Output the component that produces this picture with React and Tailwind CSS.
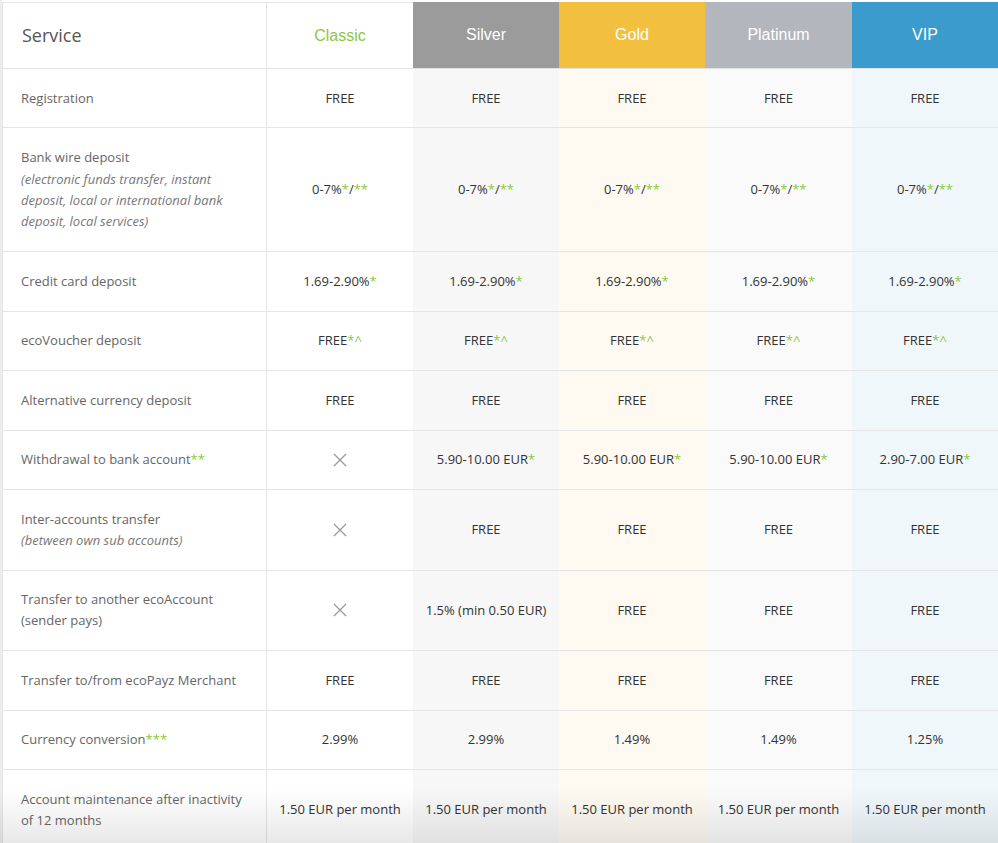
const tiers = [
  { name: 'Classic', head: 'bg-white border-t border-[#e5e5e5] text-[#8dc63f]', col: 'bg-white' },
  { name: 'Silver', head: 'bg-[#9b9b9b] text-white', col: 'bg-[#f7f7f7]' },
  { name: 'Gold', head: 'bg-[#f2bf3f] text-white', col: 'bg-[#fef9f1]' },
  { name: 'Platinum', head: 'bg-[#b3b6bd] text-white', col: 'bg-[#fafafa]' },
  { name: 'VIP', head: 'bg-[#3a9bcc] text-white', col: 'bg-[#eff7fb]' },
];

const G = ({ children }) => <span className="text-[#8dc63f]">{children}</span>;

const X = () => (
  <svg width="14" height="14" viewBox="0 0 14 14" className="text-[#9a9a9a]">
    <path d="M1 1L13 13M13 1L1 13" stroke="currentColor" strokeWidth="1.3" />
  </svg>
);

const pct = (
  <>
    0-7%<G>*</G>/<G>**</G>
  </>
);
const card = (
  <>
    1.69-2.90%<G>*</G>
  </>
);
const voucher = (
  <>
    FREE<G>*^</G>
  </>
);
const wd = (v) => (
  <>
    {v}
    <G>*</G>
  </>
);

const rows = [
  { label: 'Registration', values: ['FREE', 'FREE', 'FREE', 'FREE', 'FREE'] },
  {
    label: 'Bank wire deposit',
    note: '(electronic funds transfer, instant deposit, local or international bank deposit, local services)',
    values: [pct, pct, pct, pct, pct],
    tall: true,
  },
  { label: 'Credit card deposit', values: [card, card, card, card, card] },
  { label: 'ecoVoucher deposit', values: [voucher, voucher, voucher, voucher, voucher] },
  { label: 'Alternative currency deposit', values: ['FREE', 'FREE', 'FREE', 'FREE', 'FREE'] },
  {
    label: (
      <>
        Withdrawal to bank account<G>**</G>
      </>
    ),
    values: [<X />, wd('5.90-10.00 EUR'), wd('5.90-10.00 EUR'), wd('5.90-10.00 EUR'), wd('2.90-7.00 EUR')],
  },
  {
    label: 'Inter-accounts transfer',
    note: '(between own sub accounts)',
    values: [<X />, 'FREE', 'FREE', 'FREE', 'FREE'],
  },
  {
    label: 'Transfer to another ecoAccount (sender pays)',
    values: [<X />, '1.5% (min 0.50 EUR)', 'FREE', 'FREE', 'FREE'],
  },
  { label: 'Transfer to/from ecoPayz Merchant', values: ['FREE', 'FREE', 'FREE', 'FREE', 'FREE'] },
  {
    label: (
      <>
        Currency conversion<G>***</G>
      </>
    ),
    values: ['2.99%', '2.99%', '1.49%', '1.49%', '1.25%'],
  },
  {
    label: 'Account maintenance after inactivity of 12 months',
    values: ['1.50 EUR per month', '1.50 EUR per month', '1.50 EUR per month', '1.50 EUR per month', '1.50 EUR per month'],
  },
];

const grid = 'grid grid-cols-[265px_146px_146px_146px_147px_146px]';

export default function App() {
  return (
    <div
      className="relative h-[843px] overflow-hidden bg-white flex"
      style={{ fontFamily: '"Open Sans", "Liberation Sans", sans-serif' }}
    >
      <div className="w-[2px] shrink-0 bg-[#ededed]" />
      <div className="flex-1 pt-[2px]">
        {/* Header */}
        <div className={`${grid} border-b border-[#e3e3e3]`}>
          <div className="h-[66px] border-t border-l border-r border-[#e5e5e5] flex items-center pl-[19px] text-[18px] text-[#555]">
            Service
          </div>
          {tiers.map((t) => (
            <div
              key={t.name}
              className={`h-[66px] flex items-center justify-center text-[16px] ${t.head}`}
              style={{ fontFamily: '"Liberation Sans", Arial, sans-serif' }}
            >
              {t.name}
            </div>
          ))}
        </div>

        {/* Rows */}
        {rows.map((r, i) => (
          <div key={i} className={`${grid} border-b border-[#e5e5e5] text-[13px] leading-[21.2px]`}>
            <div
              className={`border-l border-r border-[#e5e5e5] py-[18.6px] pl-[18px] pr-[14px] text-[#666] ${
                r.tall ? 'min-h-[123px] flex flex-col justify-center' : ''
              }`}
            >
              <div>{r.label}</div>
              {r.note && <div className="italic text-[#777]">{r.note}</div>}
            </div>
            {r.values.map((v, j) => (
              <div key={j} className={`flex items-center justify-center text-center text-[#333] ${tiers[j].col}`}>
                {v}
              </div>
            ))}
          </div>
        ))}
      </div>

      {/* bottom fade */}
      <div className="pointer-events-none absolute bottom-0 left-0 right-0 h-[55px] bg-gradient-to-b from-transparent to-[rgba(0,0,0,0.09)]" />
    </div>
  );
}
